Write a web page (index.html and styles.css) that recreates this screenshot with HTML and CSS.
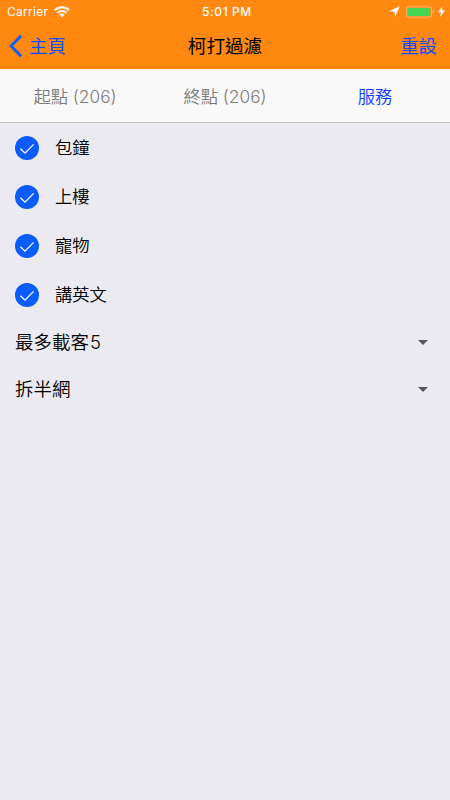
FILE: index.html
```html
<!DOCTYPE html>
<html lang="zh-Hant">
<head>
    <meta charset="UTF-8">
    <meta name="viewport" content="width=device-width, initial-scale=1.0">
    <title>柯打過濾</title>
    <link rel="stylesheet" href="styles.css">
</head>
<body>
    <header>
        <!-- Status bar -->
        <div class="status-bar">
            <div class="status-left">
                <span class="carrier">Carrier</span>
                <svg class="wifi" width="16" height="12" viewBox="0 0 16 12">
                    <path d="M0.9 4.3a10 10 0 0 1 14.2 0M3.4 6.9a6.5 6.5 0 0 1 9.2 0" fill="none" stroke="#fff" stroke-width="2"/>
                    <path d="M8 11.2L5.5 8.7a3.6 3.6 0 0 1 5 0z" fill="#fff"/>
                </svg>
            </div>
            <span class="time">5:01 PM</span>
            <div class="status-right">
                <svg width="11" height="11" viewBox="0 0 11 11">
                    <path d="M10.8 0.2L6.2 10.4L5.4 5.700L0.200 5z" fill="#fff"/>
                </svg>
                <svg class="battery" width="29" height="12" viewBox="0 0 29 12">
                    <rect x="0.6" y="0.6" width="25" height="10.8" rx="2.4" fill="none" stroke="#ffb066" stroke-width="1.1"/>
                    <rect x="2" y="2" width="22.2" height="8" rx="0.8" fill="#43d651"/>
                    <path d="M26.800 4v4c1-.3 1.600-1.100 1.600-2s-.6-1.700-1.600-2z" fill="#ffb066"/>
                </svg>
                <svg class="bolt" width="7" height="11" viewBox="0 0 7 11">
                    <path d="M4.600 0L0 6.200H3L2 11L7 4.500H3.900z" fill="#fff"/>
                </svg>
            </div>
        </div>

        <!-- Navigation -->
        <div class="nav">
            <a class="back" href="#home">
                <svg width="14" height="24" viewBox="0 0 14 24">
                    <path d="M12.200 1.800L2 12L12.200 22.200" fill="none" stroke="#0b5cff" stroke-width="2.800"/>
                </svg>
                <span>主頁</span>
            </a>
            <h1>柯打過濾</h1>
            <a class="reset" href="#reset">重設</a>
        </div>
    </header>

    <div class="tabs">
        <a href="#start">起點 (206)</a>
        <a href="#end">終點 (206)</a>
        <a class="active" href="#service">服務</a>
    </div>

    <div class="content">
        <div class="check-row">
            <svg class="check" width="24" height="24" viewBox="0 0 24 24"><circle cx="12" cy="12" r="12"/><path d="M5.400 12.800L10 17.200L18.600 8.400"/></svg>
            <span>包鐘</span>
        </div>
        <div class="check-row">
            <svg class="check" width="24" height="24" viewBox="0 0 24 24"><circle cx="12" cy="12" r="12"/><path d="M5.400 12.800L10 17.200L18.600 8.400"/></svg>
            <span>上樓</span>
        </div>
        <div class="check-row">
            <svg class="check" width="24" height="24" viewBox="0 0 24 24"><circle cx="12" cy="12" r="12"/><path d="M5.400 12.800L10 17.200L18.600 8.400"/></svg>
            <span>寵物</span>
        </div>
        <div class="check-row">
            <svg class="check" width="24" height="24" viewBox="0 0 24 24"><circle cx="12" cy="12" r="12"/><path d="M5.400 12.800L10 17.200L18.600 8.400"/></svg>
            <span>講英文</span>
        </div>
        <div class="select-row">
            <span>最多載客<span class="num">5</span></span>
            <i class="arrow"></i>
        </div>
        <div class="select-row">
            <span>拆半網</span>
            <i class="arrow"></i>
        </div>
    </div>
</body>
</html>
```
FILE: styles.css
```css
body {
    margin: 0;
    min-height: 100vh;
    font-family: Inter, "Noto Sans CJK TC", sans-serif;
    font-weight: 350;
    background-color: #ebeaf0;
    color: #000;
}

a {
    color: #0b4dff;
    text-decoration: none;
}

svg {
    display: block;
}

header {
    height: 69px;
    background-color: #ff8811;
}

/* Status bar */
.status-bar {
    display: grid;
    grid-template-columns: 1fr auto 1fr;
    align-items: center;
    height: 23px;
    padding: 0 5px 0 7px;
    color: #fff;
    font-size: 12px;
    line-height: 23px;
}

.status-left,
.status-right {
    display: flex;
    align-items: center;
}

.carrier {
    font-weight: 400;
    letter-spacing: 0.3px;
}

.wifi {
    margin-left: 6px;
}

.time {
    font-weight: 500;
    letter-spacing: 0.6px;
    padding-left: 2px;
}

.status-right {
    justify-content: flex-end;
}

.battery {
    margin: 0 3px 0 6px;
}

/* Navigation */
.nav {
    display: grid;
    grid-template-columns: 1fr auto 1fr;
    align-items: center;
    height: 46px;
    padding: 0 13px 0 9px;
    font-size: 18.4px;
    font-weight: 400;
    line-height: 46px;
}

.nav h1 {
    margin: 0;
    padding-left: 4px;
    font-size: 18.6px;
    font-weight: 400;
}

.back {
    display: flex;
    align-items: center;
}

.back span {
    margin-left: 6px;
}

.reset {
    text-align: right;
}

/* Tabs */
.tabs {
    display: flex;
    height: 53px;
    background-color: #f9f9f9;
    border-bottom: 1px solid #c0bfc4;
}

.tabs a {
    flex: 1;
    color: #7b7b7b;
    font-size: 17.3px;
    line-height: 55px;
    text-align: center;
}

.tabs .active {
    color: #0b3cff;
}

/* Filters */
.check-row {
    display: flex;
    align-items: center;
    height: 49px;
    padding: 0 15px;
    font-size: 17.3px;
    line-height: 49px;
}

.check {
    margin-right: 16px;
}

.check circle {
    fill: #0b5cff;
}

.check path {
    fill: none;
    stroke: #fff;
    stroke-width: 1.3;
}

.select-row {
    display: flex;
    align-items: center;
    justify-content: space-between;
    height: 47px;
    padding: 0 22px 0 15px;
    font-size: 18.5px;
    line-height: 47px;
}

.num {
    margin-left: 1px;
}

.arrow {
    border: 5px solid transparent;
    border-top-color: #58585c;
    border-bottom: none;
}
```
